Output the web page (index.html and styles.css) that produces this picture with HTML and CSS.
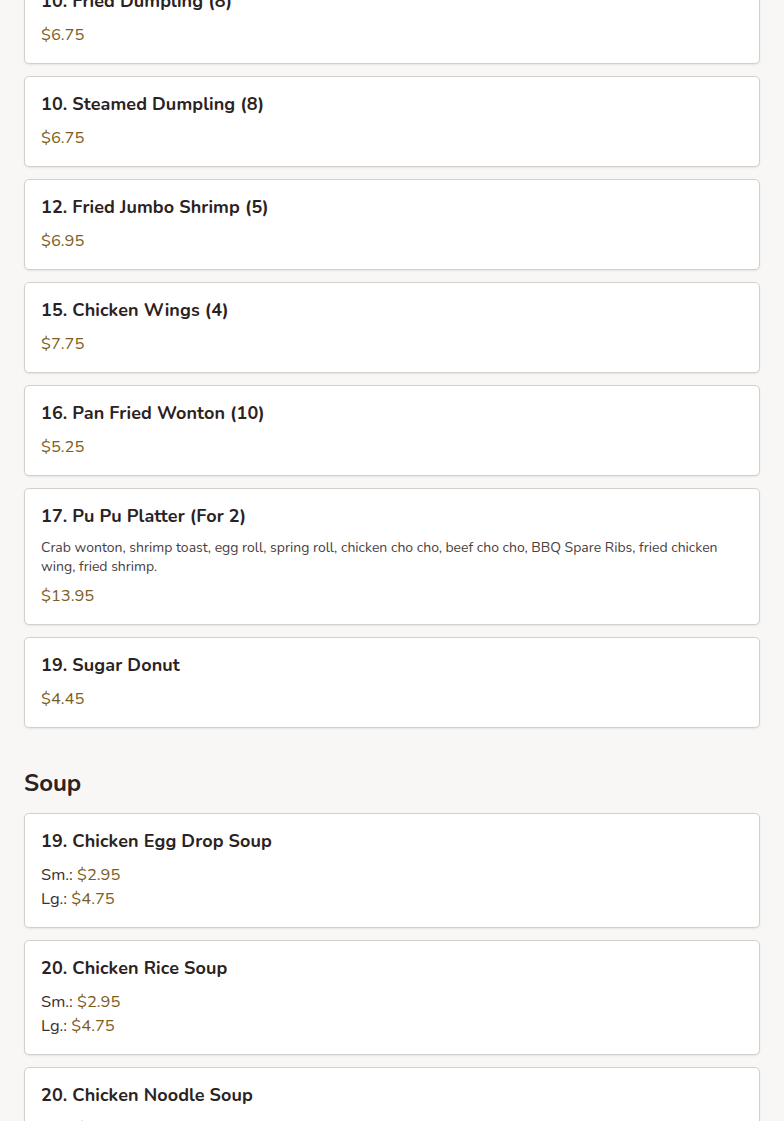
FILE: index.html
```html
<!DOCTYPE html>
<html lang="en">
<head>
<meta charset="utf-8">
<title>Menu</title>
<link rel="stylesheet" href="styles.css">
</head>
<body>
<main class="menu">
  <section class="section">
    <div class="items">
      <article class="item"><h3 class="name">10. Fried Dumpling (8)</h3><div class="price">$6.75</div></article>
      <article class="item"><h3 class="name">10. Steamed Dumpling (8)</h3><div class="price">$6.75</div></article>
      <article class="item"><h3 class="name">12. Fried Jumbo Shrimp (5)</h3><div class="price">$6.95</div></article>
      <article class="item"><h3 class="name">15. Chicken Wings (4)</h3><div class="price">$7.75</div></article>
      <article class="item"><h3 class="name">16. Pan Fried Wonton (10)</h3><div class="price">$5.25</div></article>
      <article class="item"><h3 class="name">17. Pu Pu Platter (For 2)</h3><p class="desc">Crab wonton, shrimp toast, egg roll, spring roll, chicken cho cho, beef cho cho, BBQ Spare Ribs, fried chicken wing, fried shrimp.</p><div class="price">$13.95</div></article>
      <article class="item"><h3 class="name">19. Sugar Donut</h3><div class="price">$4.45</div></article>
    </div>
  </section>
  <section class="section">
    <h2 class="section-title">Soup</h2>
    <div class="items">
      <article class="item"><h3 class="name">19. Chicken Egg Drop Soup</h3><div class="sizes"><div class="size">Sm.: <span class="amt">$2.95</span></div><div class="size">Lg.: <span class="amt">$4.75</span></div></div></article>
      <article class="item"><h3 class="name">20. Chicken Rice Soup</h3><div class="sizes"><div class="size">Sm.: <span class="amt">$2.95</span></div><div class="size">Lg.: <span class="amt">$4.75</span></div></div></article>
      <article class="item"><h3 class="name">20. Chicken Noodle Soup</h3><div class="sizes"><div class="size">Sm.: <span class="amt">$2.95</span></div><div class="size">Lg.: <span class="amt">$4.75</span></div></div></article>
    </div>
  </section>
</main>
</body>
</html>
```
FILE: styles.css
```css
* { box-sizing: border-box; }
html, body { margin: 0; padding: 0; }
body {
  background: #f8f7f5;
  font-family: Nunito, "Nunito Sans", Lato, "Open Sans", sans-serif;
  color: #2b2222;
  overflow: hidden;
}
.menu {
  padding: 0 24px;
  margin-top: -27px;
}
.section + .section { margin-top: 41px; }
.section-title {
  margin: 0 0 15px;
  font-size: 24px;
  line-height: 29px;
  font-weight: 700;
  color: #2b2222;
}
.items {
  display: flex;
  flex-direction: column;
  gap: 12px;
}
.item {
  background: #fff;
  border: 1px solid #d3d0cc;
  border-radius: 5px;
  box-shadow: 0 1px 2px rgba(0,0,0,0.08);
  padding: 15px 16px 16px;
}
.name {
  margin: 0 0 10px;
  font-size: 18px;
  line-height: 24px;
  font-weight: 700;
  letter-spacing: 0.1px;
  color: #2b2222;
}
.desc {
  margin: 0 0 8px;
  font-size: 14px;
  line-height: 19px;
  color: #4a4040;
}
.price {
  font-size: 16.5px;
  line-height: 24px;
  color: #7d5d22;
}
.size {
  font-size: 16.5px;
  line-height: 24px;
  color: #3a3030;
}
.amt { color: #7d5d22; }
```
